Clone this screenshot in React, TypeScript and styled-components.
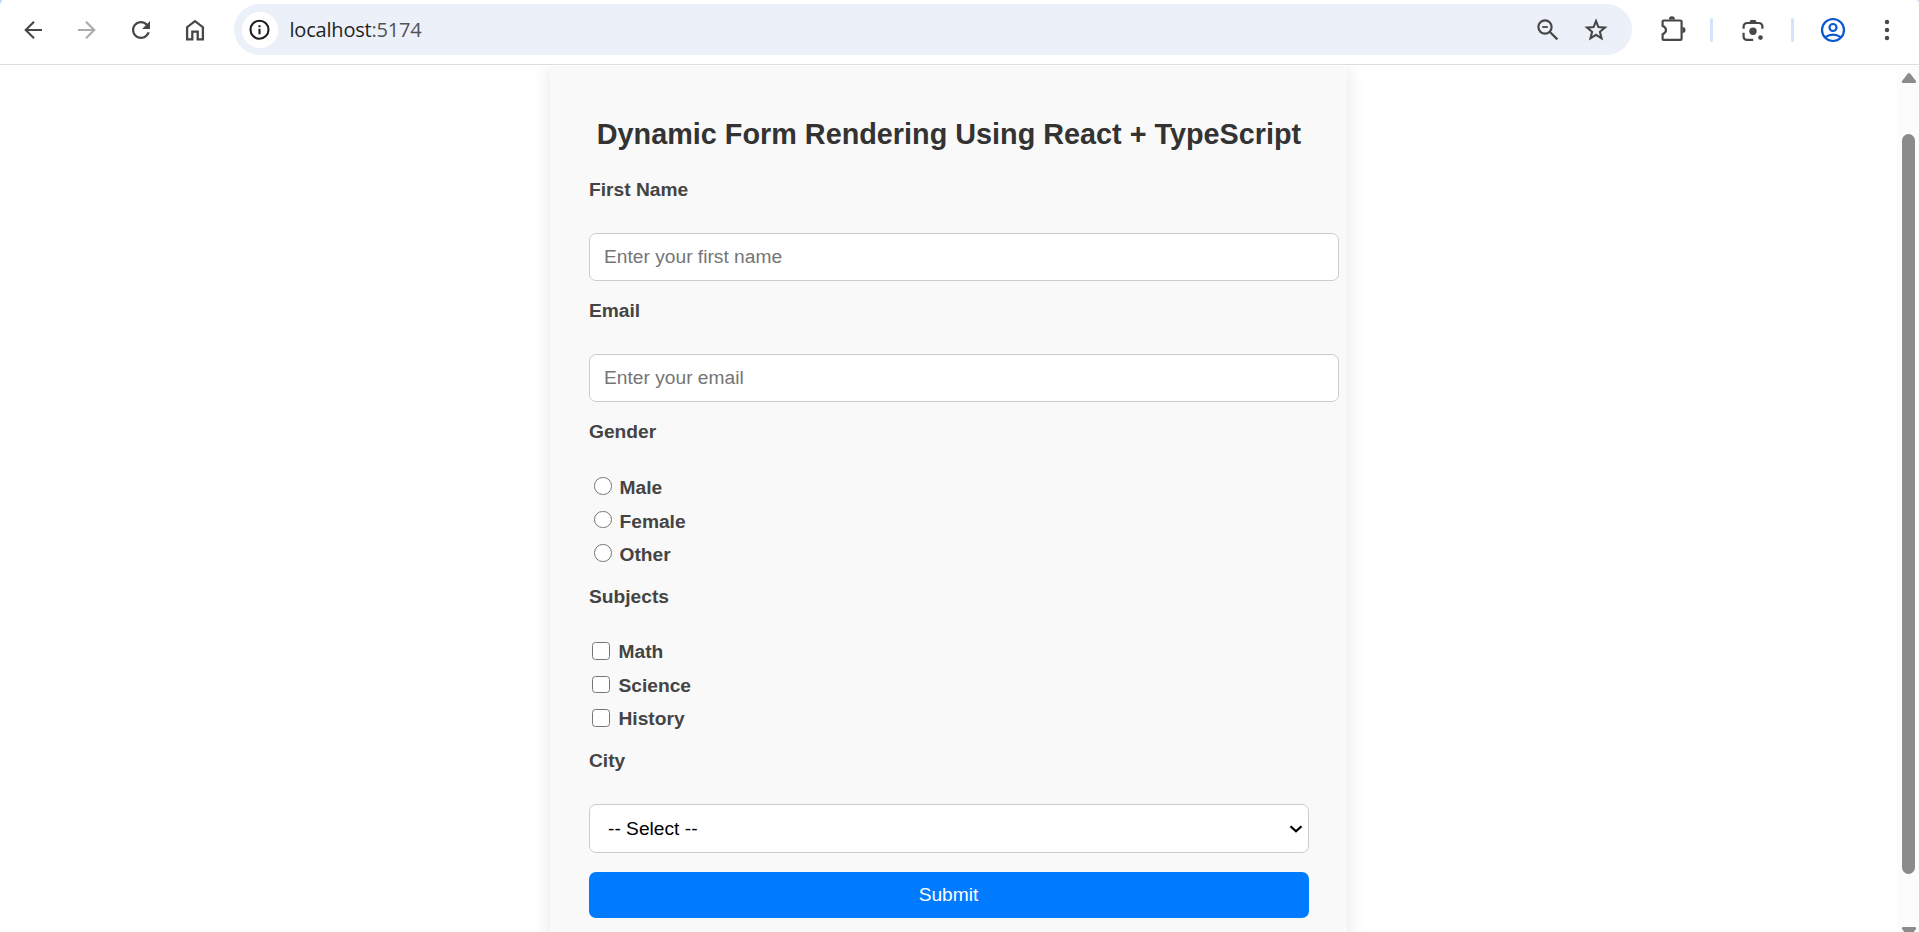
import React from "react";
import styled, { createGlobalStyle } from "styled-components";

const GlobalStyle = createGlobalStyle`
  * { box-sizing: border-box; }
  body { margin: 0; background: #fff; overflow: hidden; }
`;

const Window = styled.div`
  display: flex;
  flex-direction: column;
  width: 100vw;
  height: 100vh;
  overflow: hidden;
  background: #fff;
  font-family: "Liberation Sans", Arial, sans-serif;
`;

const Toolbar = styled.header`
  position: relative;
  display: flex;
  align-items: flex-start;
  flex: none;
  height: 65px;
  padding-top: 4px;
  border-bottom: 1px solid #dcdddf;
`;

const WindowCorner = styled.svg<{ $side: "left" | "right" }>`
  position: absolute;
  top: 0;
  ${(p) => p.$side}: 0;
`;

const NavButtons = styled.nav`
  display: flex;
  align-items: center;
  gap: 22px;
  width: 234px;
  height: 52px;
  padding-left: 17px;
`;

const IconButton = styled.button<{ $color?: string }>`
  display: block;
  flex: none;
  width: 32px;
  height: 32px;
  padding: 0;
  border: 0;
  background: none;
  color: ${(p) => p.$color ?? "#474747"};

  svg { display: block; }
`;

const AddressBar = styled.div`
  display: flex;
  align-items: center;
  width: 1398px;
  height: 51px;
  padding: 0 20px 0 8px;
  border-radius: 26px;
  background: #ecf0f9;
`;

const SiteInfo = styled.span`
  display: flex;
  align-items: center;
  justify-content: center;
  width: 36px;
  height: 36px;
  border-radius: 50%;
  background: #fff;
  color: #1f1f1f;
`;

const Url = styled.span`
  flex: 1;
  margin-left: 11.5px;
  font: 20px/28px "Open Sans", "Noto Sans", sans-serif;
  letter-spacing: -0.2px;
  color: #1f1f1f;
`;

const Port = styled.span`
  color: #505357;
`;

const AddressActions = styled.div`
  display: flex;
  gap: 16px;
`;

const Actions = styled.div`
  display: flex;
  align-items: center;
  height: 52px;
  padding-left: 24px;
`;

const Divider = styled.span<{ $after: number }>`
  width: 3px;
  height: 24px;
  margin: 0 ${(p) => p.$after}px 0 22px;
  border-radius: 2px;
  background: #d3e3fd;
`;

const MenuButton = styled(IconButton)`
  margin-left: 22px;
`;

const Viewport = styled.main`
  display: flex;
  flex: 1;
  min-height: 0;
  margin-top: 1px;
`;

const Page = styled.div`
  flex: 1;
  padding-left: 550px;
  overflow: hidden;
`;

const Card = styled.form`
  width: 797px;
  height: 980px;
  padding: 50px 38px 0 39px;
  background: #f9f9f9;
  box-shadow: 0 0 18px rgba(0, 0, 0, 0.1);
`;

const Title = styled.h2`
  margin: 0 0 25px;
  font-size: 28.8px;
  line-height: 37px;
  text-align: center;
  white-space: nowrap;
  color: #333;
`;

const Field = styled.div<{ $gap: number }>`
  display: flex;
  flex-direction: column;
  margin-bottom: ${(p) => p.$gap}px;
`;

const Label = styled.label`
  height: 24px;
  margin-bottom: 31px;
  font-size: 19.2px;
  font-weight: bold;
  line-height: 24px;
  color: #444;
`;

const TextInput = styled.input`
  width: 750px;
  height: 48px;
  padding: 0 14px;
  border: 1px solid #ccc;
  border-radius: 7px;
  background: #fff;
  font: 19.2px "Liberation Sans", Arial, sans-serif;

  &::placeholder { color: #757575; }
`;

const Options = styled.div<{ $indent: number }>`
  display: flex;
  flex-direction: column;
  height: 101px;
  padding-left: ${(p) => p.$indent}px;
`;

const Option = styled.label<{ $gap: number; $line: number }>`
  display: flex;
  flex: 1;
  align-items: flex-start;
  gap: ${(p) => p.$gap}px;
  font-size: 19.2px;
  font-weight: bold;
  line-height: ${(p) => p.$line}px;
  color: #444;
`;

const Choice = styled.input`
  appearance: none;
  width: 17.5px;
  height: 17.5px;
  margin: 2px 0 0;
  border: 1.2px solid #767676;
  border-radius: ${(p) => (p.type === "radio" ? "50%" : "3.5px")};
  background: #fff;
`;

const SelectBox = styled.div`
  display: grid;
  align-items: center;
  width: 720px;
`;

const Select = styled.select`
  grid-area: 1 / 1;
  appearance: none;
  width: 720px;
  height: 49px;
  padding: 0 18px;
  border: 1px solid #ccc;
  border-radius: 7px;
  background: #fff;
  color: #000;
  font: 19.2px "Liberation Sans", Arial, sans-serif;
`;

const Chevron = styled.svg`
  grid-area: 1 / 1;
  justify-self: end;
  margin-right: 6px;
  pointer-events: none;
`;

const Submit = styled.button`
  display: block;
  width: 720px;
  height: 46px;
  padding: 0 1px 0 0;
  border: 0;
  border-radius: 7px;
  background: #007bff;
  color: #fff;
  font: 19.2px "Liberation Sans", Arial, sans-serif;
`;

const Scrollbar = styled.div`
  display: flex;
  flex-direction: column;
  align-items: center;
  width: 22px;
  padding: 7px 0 0 1px;
  background: #fcfcfc;
`;

const Thumb = styled.div`
  flex: none;
  width: 13px;
  height: 740px;
  margin: 51px 0 53px;
  border-radius: 7px;
  background: #8b8b8b;
`;

const ScrollArrow = styled.svg`
  flex: none;
  display: block;
`;

type IconProps = { children: React.ReactNode; width?: number };

const Icon = ({ children, width = 2.1 }: IconProps) => (
  <svg width="32" height="32" viewBox="0 0 32 32" fill="none" stroke="currentColor" strokeWidth={width}>
    {children}
  </svg>
);

const textFields = [
  { label: "First Name", placeholder: "Enter your first name", type: "text" },
  { label: "Email", placeholder: "Enter your email", type: "email" },
];

export default function App() {
  return (
    <Window>
      <GlobalStyle />
      <Toolbar>
        <WindowCorner $side="left" width="4" height="7">
          <path d="M0 0H2.5Q.5 2 0 6Z" fill="#c2d7fb" />
        </WindowCorner>
        <WindowCorner $side="right" width="3" height="3">
          <path d="M1 0H3V2Z" fill="#c2d7fb" />
        </WindowCorner>
        <NavButtons>
          <IconButton aria-label="Back">
            <Icon><path d="M25 16H8.8M17 7.7 8.7 16 17 24.3" /></Icon>
          </IconButton>
          <IconButton aria-label="Forward" $color="#ababab">
            <Icon><path d="M7 16H23.2M15 7.7 23.3 16 15 24.3" /></Icon>
          </IconButton>
          <IconButton aria-label="Reload">
            <Icon width={0}>
              <path
                transform="translate(2.5 2.5) scale(1.125)"
                fill="currentColor"
                d="M17.65 6.35C16.2 4.9 14.21 4 12 4c-4.42 0-7.99 3.58-7.99 8s3.57 8 7.99 8c3.73 0 6.84-2.55 7.73-6h-2.08c-.82 2.33-3.04 4-5.65 4-3.31 0-6-2.69-6-6s2.69-6 6-6c1.66 0 3.14.69 4.22 1.78L13 11h7V4l-2.35 2.35z"
              />
            </Icon>
          </IconButton>
          <IconButton aria-label="Home">
            <Icon width={2.3}><path d="M8.1 25.4V13.2L16 7.2l7.900 6v12.200h-5.200v-7.800h-5.400v7.800Z" /></Icon>
          </IconButton>
        </NavButtons>
        <AddressBar>
          <SiteInfo>
            <Icon>
              <circle cx="15.5" cy="15.7" r="9" />
              <path d="M15.500 14.800v5.500M15.500 11.200v2.100" />
            </Icon>
          </SiteInfo>
          <Url>localhost<Port>:5174</Port></Url>
          <AddressActions>
            <IconButton aria-label="Zoom">
              <Icon width={2.2}>
                <circle cx="13" cy="13" r="6.600" />
                <path d="m17.700 17.700 7.700 7.700" />
                <path d="M10.200 13h5.600" strokeWidth="1.800" />
              </Icon>
            </IconButton>
            <IconButton aria-label="Bookmark">
              <Icon width={2.1}>
                <path d="m16 7 2.4 6.1 6.6.5-5.1 4.2 1.6 6.5-5.5-3.5-5.5 3.5 1.6-6.500L7 13.600l6.600-.5Z" />
              </Icon>
            </IconButton>
          </AddressActions>
        </AddressBar>
        <Actions>
          <IconButton aria-label="Extensions">
            <Icon width={2.2}>
              <path d="M7.600 6.500H24.400a1.200 1.200 0 0 1 1.200 1.200V24.700a1.200 1.200 0 0 1-1.200 1.200H7.600a1 1 0 0 1-1-1v-4.700q3.400-1.200 3.400-4.100T6.600 12V7.500a1 1 0 0 1 1-1Z" />
              <path d="M12.900 5.600a3 3.300 0 0 1 6 0ZM26.500 13a3 3 0 0 1 0 6Z" fill="currentColor" stroke="none" />
            </Icon>
          </IconButton>
          <Divider $after={24} />
          <IconButton aria-label="Search by image">
            <Icon width={2.2}>
              <path d="M6.600 14.800v-2.400A3.400 3.400 0 0 1 10 9h12a3.400 3.400 0 0 1 3.400 3.400v2.400M6.600 18.700v4A3.200 3.200 0 0 0 9.800 25.900h6.400" />
              <path d="M12 9l1.500-3h5L20 9Z" fill="currentColor" stroke="none" />
              <circle cx="16" cy="17.200" r="3.700" fill="currentColor" stroke="none" />
              <circle cx="23.500" cy="23.600" r="2.300" fill="currentColor" stroke="none" />
            </Icon>
          </IconButton>
          <Divider $after={23} />
          <IconButton aria-label="Profile" $color="#0b57d0">
            <Icon width={2.2}>
              <circle cx="16" cy="16" r="11" />
              <circle cx="16" cy="13.500" r="3.500" />
              <path d="M8.300 23.200q7.700-5.200 15.400 0" />
            </Icon>
          </IconButton>
          <MenuButton aria-label="Menu">
            <Icon width={0}>
              <g fill="currentColor">
                <circle cx="16" cy="8" r="2.200" />
                <circle cx="16" cy="16" r="2.200" />
                <circle cx="16" cy="24" r="2.200" />
              </g>
            </Icon>
          </MenuButton>
        </Actions>
      </Toolbar>
      <Viewport>
        <Page>
          <Card>
            <Title>Dynamic Form Rendering Using React + TypeScript</Title>
            {textFields.map((f) => (
              <Field key={f.label} $gap={18}>
                <Label>{f.label}</Label>
                <TextInput type={f.type} placeholder={f.placeholder} />
              </Field>
            ))}
            <Field $gap={9}>
              <Label>Gender</Label>
              <Options $indent={5}>
                {["Male", "Female", "Other"].map((o) => (
                  <Option key={o} $gap={8} $line={25}>
                    <Choice type="radio" name="gender" />
                    {o}
                  </Option>
                ))}
              </Options>
            </Field>
            <Field $gap={8}>
              <Label>Subjects</Label>
              <Options $indent={3}>
                {["Math", "Science", "History"].map((o) => (
                  <Option key={o} $gap={9} $line={23}>
                    <Choice type="checkbox" />
                    {o}
                  </Option>
                ))}
              </Options>
            </Field>
            <Field $gap={19}>
              <Label>City</Label>
              <SelectBox>
                <Select defaultValue="">
                  <option value="">-- Select --</option>
                </Select>
                <Chevron width="14" height="10" viewBox="0 0 14 10">
                  <path d="m1.500 2.200 5.500 5 5.500-5" fill="none" stroke="#000" strokeWidth="2.200" />
                </Chevron>
              </SelectBox>
            </Field>
            <Submit type="button">Submit</Submit>
          </Card>
        </Page>
        <Scrollbar>
          <ScrollArrow width="16" height="10" viewBox="0 0 16 10">
            <path d="M6.500.900Q8-.700 9.500.900L15 8Q15.500 10 13.700 10H2.300Q.500 10 1 8Z" fill="#8b8b8b" />
          </ScrollArrow>
          <Thumb />
          <ScrollArrow width="16" height="10" viewBox="0 0 16 10">
            <path d="M6.500 9.100Q8 10.700 9.500 9.100L15 2Q15.500 0 13.700 0H2.300Q.500 0 1 2Z" fill="#8b8b8b" />
          </ScrollArrow>
        </Scrollbar>
      </Viewport>
    </Window>
  );
}
